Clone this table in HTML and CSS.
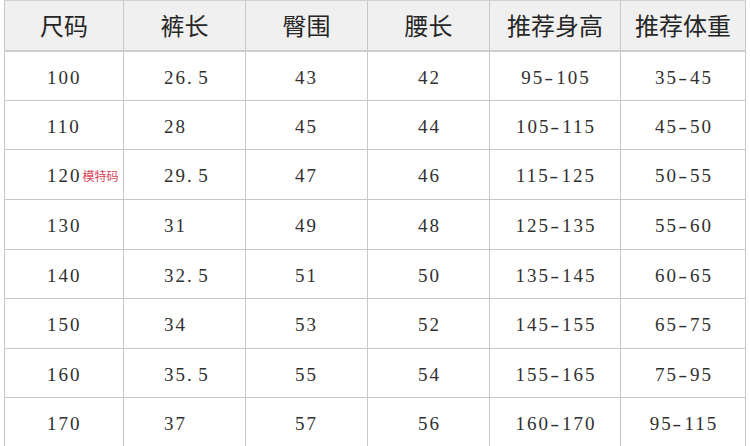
FILE: index.html
```html
<!DOCTYPE html>
<html lang="zh">
<head>
<meta charset="utf-8">
<link rel="stylesheet" href="styles.css">
</head>
<body>
<div class="table">
  <div class="cell head">尺码</div>
  <div class="cell head">裤长</div>
  <div class="cell head">臀围</div>
  <div class="cell head">腰长</div>
  <div class="cell head">推荐身高</div>
  <div class="cell head">推荐体重</div>

  <div class="cell c1">100</div><div class="cell c2">26<span class="dot">.</span>5</div><div class="cell c3">43</div><div class="cell c4">42</div><div class="cell c5">95<span class="dash">-</span>105</div><div class="cell c6">35<span class="dash">-</span>45</div>
  <div class="cell c1">110</div><div class="cell c2">28</div><div class="cell c3">45</div><div class="cell c4">44</div><div class="cell c5">105<span class="dash">-</span>115</div><div class="cell c6">45<span class="dash">-</span>50</div>
  <div class="cell c1">120<span class="tag">模特码</span></div><div class="cell c2">29<span class="dot">.</span>5</div><div class="cell c3">47</div><div class="cell c4">46</div><div class="cell c5">115<span class="dash">-</span>125</div><div class="cell c6">50<span class="dash">-</span>55</div>
  <div class="cell c1">130</div><div class="cell c2">31</div><div class="cell c3">49</div><div class="cell c4">48</div><div class="cell c5">125<span class="dash">-</span>135</div><div class="cell c6">55<span class="dash">-</span>60</div>
  <div class="cell c1">140</div><div class="cell c2">32<span class="dot">.</span>5</div><div class="cell c3">51</div><div class="cell c4">50</div><div class="cell c5">135<span class="dash">-</span>145</div><div class="cell c6">60<span class="dash">-</span>65</div>
  <div class="cell c1">150</div><div class="cell c2">34</div><div class="cell c3">53</div><div class="cell c4">52</div><div class="cell c5">145<span class="dash">-</span>155</div><div class="cell c6">65<span class="dash">-</span>75</div>
  <div class="cell c1">160</div><div class="cell c2">35<span class="dot">.</span>5</div><div class="cell c3">55</div><div class="cell c4">54</div><div class="cell c5">155<span class="dash">-</span>165</div><div class="cell c6">75<span class="dash">-</span>95</div>
  <div class="cell c1">170</div><div class="cell c2">37</div><div class="cell c3">57</div><div class="cell c4">56</div><div class="cell c5">160<span class="dash">-</span>170</div><div class="cell c6">95<span class="dash">-</span>115</div>
</div>
</body>
</html>
```
FILE: styles.css
```css
html, body {
  margin: 0;
  padding: 0;
  background: #ffffff;
  overflow: hidden;
}
body {
  width: 750px;
  height: 446px;
}
.table {
  margin-left: 4px;
  width: 742px;
  display: grid;
  grid-template-columns: 119px 122px 122px 122px 131px 125px;
  grid-template-rows: 51px 49px 49px 50px 50px 49px 50px 49px 50px;
  border-left: 1px solid #c8c8c8;
  border-top: 1px solid #d0d0d0;
  box-sizing: border-box;
}
.cell {
  box-sizing: border-box;
  border-right: 1px solid #c8c8c8;
  border-bottom: 1px solid #c8c8c8;
  display: flex;
  align-items: center;
  font-family: "Liberation Serif", "DejaVu Serif", serif;
  font-size: 19px;
  letter-spacing: 2px;
  color: #303030;
  white-space: nowrap;
}
.head {
  background: #f0f0f0;
  justify-content: center;
  border-bottom: 2px solid #cfcfcf;
  font-family: "Noto Sans CJK SC", sans-serif;
  font-size: 24px;
  letter-spacing: 0;
  color: #262626;
  padding-bottom: 2px;
}
.c1 { padding-left: 42px; padding-top: 3px; }
.c2 { padding-left: 40px; padding-top: 3px; }
.c3 { padding-left: 49px; padding-top: 3px; }
.c4 { padding-left: 50px; padding-top: 3px; }
.c5, .c6 { justify-content: center; padding-top: 3px; padding-left: 2px; }
.dash {
  display: inline-block;
  transform: scaleX(1.4);
  margin: 0 1.8px;
}
.dot {
  margin-right: 4.5px;
}
.tag {
  font-family: "Noto Sans CJK SC", sans-serif;
  font-size: 12px;
  letter-spacing: 0;
  color: #d9445a;
  margin-left: 1px;
  padding-bottom: 1px;
}
```
